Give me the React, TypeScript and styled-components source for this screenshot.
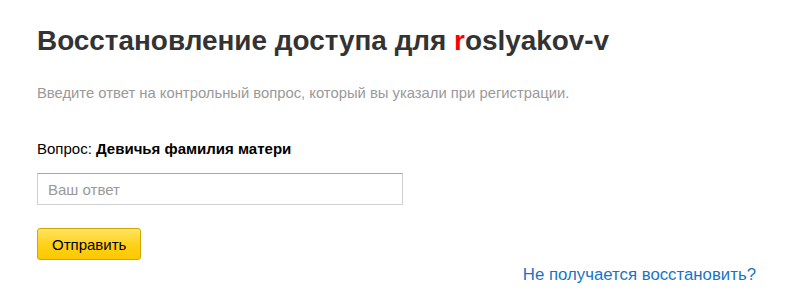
import styled, { createGlobalStyle } from 'styled-components'

const GlobalStyle = createGlobalStyle`
  html, body {
    margin: 0;
    padding: 0;
    background: #fff;
  }

  body {
    font-family: "Liberation Sans", Arial, sans-serif;
  }
`

export default function App (): JSX.Element {
  return (
    <>
      <GlobalStyle />
      <PageStyledContainer>
        <TitleStyled>
          Восстановление доступа для <LoginStyled><span className='first'>r</span>oslyakov-v</LoginStyled>
        </TitleStyled>
        <HintStyled>Введите ответ на контрольный вопрос, который вы указали при регистрации.</HintStyled>
        <QuestionStyled>Вопрос: <b>Девичья фамилия матери</b></QuestionStyled>
        <AnswerStyledInput type='text' placeholder='Ваш ответ' />
        <SubmitStyledButton type='button'>Отправить</SubmitStyledButton>
        <FooterStyledRow>
          <HelpStyledLink href='#'>Не получается восстановить?</HelpStyledLink>
        </FooterStyledRow>
      </PageStyledContainer>
    </>
  )
}

const PageStyledContainer = styled.div`
  display: flex;
  flex-direction: column;
  align-items: flex-start;

  width: 789px;
  height: 306px;
  padding: 24px 33px 0 37px;
  box-sizing: border-box;
`

const TitleStyled = styled.h1`
  margin: 0;

  font-size: 27.9px;
  font-weight: 700;
  line-height: 34px;
  color: #333;
`

const LoginStyled = styled.span`
  & > .first {
    color: #f00;
  }
`

const HintStyled = styled.p`
  margin: 26px 0 0;

  font-size: 14.8px;
  line-height: 18px;
  color: #999;
`

const QuestionStyled = styled.p`
  margin: 38px 0 0;

  font-size: 15px;
  line-height: 18px;
  color: #000;

  & > b {
    font-weight: 700;
  }
`

const AnswerStyledInput = styled.input`
  width: 366px;
  height: 32px;
  margin-top: 15px;
  padding: 0 10px;
  box-sizing: border-box;
  border: 1px solid #d0d0d0;
  border-top-color: #a8a8a8;
  border-radius: 0;
  outline: none;

  font-family: "Liberation Sans", Arial, sans-serif;
  font-size: 15px;
  color: #000;

  &::placeholder {
    color: #999;
  }
`

const SubmitStyledButton = styled.button`
  height: 32px;
  margin-top: 23px;
  padding: 0 14px;
  border: 1px solid #d2a800;
  border-radius: 3px;

  background: linear-gradient(to bottom, #ffe566 0%, #ffd11a 50%, #fcc800 100%);

  font-family: "Liberation Sans", Arial, sans-serif;
  font-size: 15px;
  color: #000;
  cursor: pointer;
`

const FooterStyledRow = styled.div`
  display: flex;
  justify-content: flex-end;

  width: 100%;
  margin-top: 5px;
`

const HelpStyledLink = styled.a`
  font-size: 16.8px;
  line-height: 20px;
  color: #1a73c4;
  text-decoration: none;
`
